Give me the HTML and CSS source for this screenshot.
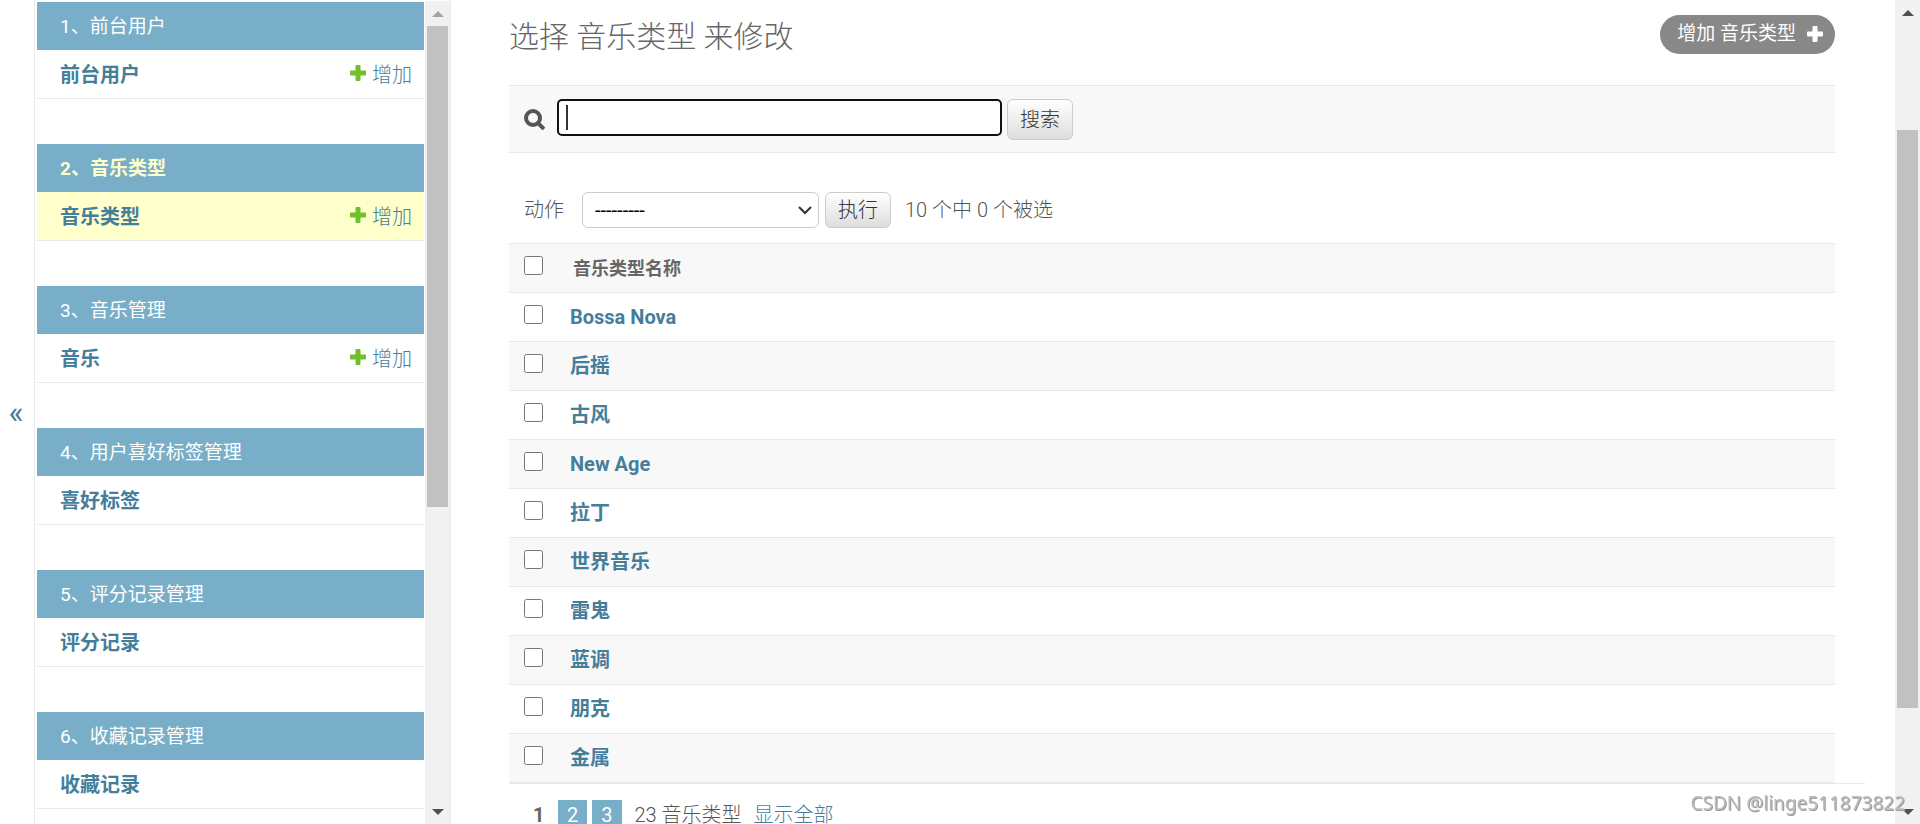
FILE: index.html
```html
<!DOCTYPE html>
<html lang="zh-hans">
<head>
  <meta charset="UTF-8" />
  <meta name="viewport" content="width=device-width, initial-scale=1.0" />
  <title>选择 音乐类型 来修改</title>
  <link rel="stylesheet" href="styles.css">
</head>
<body>
  <button class="toggle-nav" aria-label="切换导航">«</button>

  <nav class="sidebar">
    <div class="app-list">
      <section class="module">
        <h2><a href="#">1、前台用户</a></h2>
        <div class="model"><a href="#">前台用户</a><a href="#" class="addlink"><svg viewBox="0 0 16 16"><path d="M6.5 0h3q1 0 1 1v4.500h4.500q1 0 1 1v3q0 1-1 1h-4.500v4.500q0 1-1 1h-3q-1 0-1-1v-4.500H1q-1 0-1-1v-3q0-1 1-1h4.500V1q0-1 1-1z"/></svg>增加</a></div>
      </section>
      <section class="module current">
        <h2><a href="#">2、音乐类型</a></h2>
        <div class="model"><a href="#">音乐类型</a><a href="#" class="addlink"><svg viewBox="0 0 16 16"><path d="M6.5 0h3q1 0 1 1v4.500h4.500q1 0 1 1v3q0 1-1 1h-4.500v4.500q0 1-1 1h-3q-1 0-1-1v-4.500H1q-1 0-1-1v-3q0-1 1-1h4.500V1q0-1 1-1z"/></svg>增加</a></div>
      </section>
      <section class="module">
        <h2><a href="#">3、音乐管理</a></h2>
        <div class="model"><a href="#">音乐</a><a href="#" class="addlink"><svg viewBox="0 0 16 16"><path d="M6.5 0h3q1 0 1 1v4.500h4.500q1 0 1 1v3q0 1-1 1h-4.500v4.500q0 1-1 1h-3q-1 0-1-1v-4.500H1q-1 0-1-1v-3q0-1 1-1h4.500V1q0-1 1-1z"/></svg>增加</a></div>
      </section>
      <section class="module">
        <h2><a href="#">4、用户喜好标签管理</a></h2>
        <div class="model"><a href="#">喜好标签</a></div>
      </section>
      <section class="module">
        <h2><a href="#">5、评分记录管理</a></h2>
        <div class="model"><a href="#">评分记录</a></div>
      </section>
      <section class="module">
        <h2><a href="#">6、收藏记录管理</a></h2>
        <div class="model"><a href="#">收藏记录</a></div>
      </section>
    </div>
    <div class="scrollbar nav-scroll">
      <svg class="arrow off" viewBox="0 0 25 25"><path d="M7 16l6-6 6 6z"/></svg>
      <div class="thumb"></div>
      <div class="after"></div>
      <svg class="arrow" viewBox="0 0 25 25"><path d="M7 10l6 6 6-6z"/></svg>
    </div>
  </nav>

  <main class="content">
    <div class="title-row">
      <h1>选择 音乐类型 来修改</h1>
      <a href="#" class="add-button">增加 音乐类型<svg viewBox="0 0 16 16"><path d="M6.500 0h3q1 0 1 1v4.500h4.500q1 0 1 1v3q0 1-1 1h-4.500v4.500q0 1-1 1h-3q-1 0-1-1v-4.500H1q-1 0-1-1v-3q0-1 1-1h4.500V1q0-1 1-1z"/></svg></a>
    </div>

    <form class="toolbar">
      <label for="searchbar" aria-label="搜索"><svg viewBox="0 0 21 21"><circle cx="9" cy="9" r="7"/><path d="M14 14l6 6"/></svg></label>
      <input type="text" id="searchbar">
      <button type="button">搜索</button>
    </form>

    <div class="actions">
      <label for="action">动作</label>
      <span class="select-wrap">
        <select id="action">
          <option>---------</option>
          <option>删除所选的 音乐类型</option>
        </select>
        <svg viewBox="0 0 14 9"><path d="M1 1l6 6 6-6"/></svg>
      </span>
      <button type="button">执行</button>
      <span class="counter">10 个中 0 个被选</span>
    </div>

    <table class="results">
      <thead>
        <tr><th><input type="checkbox" aria-label="全选"></th><th class="name">音乐类型名称</th></tr>
      </thead>
      <tbody>
        <tr><td><input type="checkbox" id="r1" aria-label="Bossa Nova"></td><th><a href="#">Bossa Nova</a></th></tr>
        <tr><td><input type="checkbox" id="r2" aria-label="后摇"></td><th><a href="#">后摇</a></th></tr>
        <tr><td><input type="checkbox" id="r3" aria-label="古风"></td><th><a href="#">古风</a></th></tr>
        <tr><td><input type="checkbox" id="r4" aria-label="New Age"></td><th><a href="#">New Age</a></th></tr>
        <tr><td><input type="checkbox" id="r5" aria-label="拉丁"></td><th><a href="#">拉丁</a></th></tr>
        <tr><td><input type="checkbox" id="r6" aria-label="世界音乐"></td><th><a href="#">世界音乐</a></th></tr>
        <tr><td><input type="checkbox" id="r7" aria-label="雷鬼"></td><th><a href="#">雷鬼</a></th></tr>
        <tr><td><input type="checkbox" id="r8" aria-label="蓝调"></td><th><a href="#">蓝调</a></th></tr>
        <tr><td><input type="checkbox" id="r9" aria-label="朋克"></td><th><a href="#">朋克</a></th></tr>
        <tr><td><input type="checkbox" id="r10" aria-label="金属"></td><th><a href="#">金属</a></th></tr>
      </tbody>
    </table>

    <div class="paginator">
      <span class="this-page">1</span>
      <a href="#" class="page">2</a>
      <a href="#" class="page">3</a>
      <span class="total">23 音乐类型</span>
      <a href="#" class="showall">显示全部</a>
    </div>
  </main>

  <div class="scrollbar page-scroll">
    <svg class="arrow" viewBox="0 0 25 25"><path d="M7 16l6-6 6 6z"/></svg>
    <div class="before"></div>
    <div class="thumb"></div>
    <div class="after"></div>
    <svg class="arrow" viewBox="0 0 25 25"><path d="M7 10l6 6 6-6z"/></svg>
  </div>

  <div class="watermark">CSDN @linge511873822</div>
</body>
</html>
```
FILE: styles.css
```css
:root {
  --link: #447e9b;
  --primary: #79aec8;
  --border: #e8e8e8;
  --body-fg: #666;
  --shade: #f8f8f8;
}

* {
  box-sizing: border-box;
}
body {
  margin: 0;
  display: flex;
  height: 100vh;
  overflow: hidden;
  background: #fff;
  color: var(--body-fg);
  font-family: Roboto, "Noto Sans CJK SC", sans-serif;
  font-size: 20px;
  font-weight: 400;
  line-height: 28px;
}
a {
  color: var(--link);
  text-decoration: none;
}
button, input, select {
  font: inherit;
}

/* sidebar */
.toggle-nav {
  flex: none;
  width: 35px;
  padding: 0 2px 0 0;
  border: none;
  border-right: 1px solid #eaeaea;
  background: #fff;
  color: var(--link);
  font-size: 32px;
}
.sidebar {
  flex: none;
  display: flex;
  width: 416px;
  padding-left: 2px;
  border-right: 1px solid #eaeaea;
}
.app-list {
  flex: 1;
  padding: 2px 1px 0 0;
}
.module {
  margin-bottom: 45px;
}
.module h2 {
  margin: 0;
  padding: 11px 23px 9px;
  background: var(--primary);
  font-size: 19px;
  font-weight: 400;
}
.module h2 a {
  color: #fff;
}
.model {
  display: flex;
  justify-content: space-between;
  padding: 11px 12px 9px 23px;
  border-bottom: 1px solid var(--border);
  font-weight: 700;
}
.addlink {
  display: flex;
  align-items: center;
  font-weight: 300;
}
.addlink svg {
  width: 16px;
  height: 16px;
  margin: 0 6px 4px 0;
  fill: #70bf2b;
}
.current h2 a {
  color: #ffc;
  font-weight: 700;
}
.current .model {
  background: #ffc;
}

/* scrollbars */
.scrollbar {
  flex: none;
  display: flex;
  flex-direction: column;
  width: 25px;
  background: #f1f1f1;
}
.arrow {
  flex: none;
  width: 25px;
  height: 25px;
  fill: #505050;
}
.arrow.off {
  fill: #a3a3a3;
}
.thumb {
  margin: 0 2px;
  background: #c1c1c1;
}
.nav-scroll {
  margin-top: 1px;
}
.nav-scroll .thumb {
  flex: 481;
}
.nav-scroll .after {
  flex: 292;
}
.page-scroll .before {
  flex: 105;
}
.page-scroll .thumb {
  flex: 578;
}
.page-scroll .after {
  flex: 91;
}

/* content */
.content {
  flex: 1;
  padding: 15px 60px 0 58px;
}
.title-row {
  display: flex;
  justify-content: space-between;
  align-items: flex-start;
  height: 70px;
}
h1 {
  margin: 0;
  font-size: 30px;
  font-weight: 300;
  line-height: 43px;
}
.add-button {
  display: flex;
  align-items: center;
  gap: 11px;
  height: 39px;
  padding: 0 12px 2px 17px;
  border-radius: 20px;
  background: #888;
  color: #fff;
  font-size: 19px;
}
.add-button svg {
  width: 16px;
  height: 16px;
  fill: #fff;
}
.toolbar {
  display: flex;
  align-items: flex-start;
  height: 68px;
  padding: 13px 15px;
  border-top: 1px solid var(--border);
  border-bottom: 1px solid var(--border);
  background: var(--shade);
}
.toolbar label {
  width: 33px;
  padding-top: 10px;
  line-height: 0;
}
.toolbar svg {
  width: 21px;
  height: 21px;
  fill: none;
  stroke: #555;
  stroke-width: 4;
}
.toolbar input {
  width: 445px;
  height: 37px;
  margin-right: 5px;
  border: 2px solid #101010;
  border-radius: 5px;
  background: #fff linear-gradient(#333, #333) no-repeat 7px 4px / 2px 25px;
}
button {
  cursor: pointer;
}
.toolbar button, .actions button {
  width: 66px;
  height: 41px;
  padding: 0;
  border: 1px solid #ccc;
  border-radius: 6px;
  background: linear-gradient(#fff, #ddd);
  color: #333;
  font-weight: 300;
}
.actions {
  display: flex;
  align-items: center;
  padding: 39px 15px 15px;
}
.actions label {
  width: 58px;
}
.select-wrap {
  position: relative;
  width: 237px;
  margin-right: 6px;
}
.select-wrap select {
  display: block;
  appearance: none;
  width: 100%;
  height: 36px;
  padding: 0 12px;
  border: 1px solid #ccc;
  border-radius: 6px;
  background: #fff;
  color: #000;
}
.select-wrap svg {
  position: absolute;
  right: 7px;
  top: 14px;
  width: 14px;
  height: 9px;
  fill: none;
  stroke: #333;
  stroke-width: 2;
}
.actions button {
  height: 36px;
}
.counter {
  margin-left: 14px;
}
.actions label, .counter, .total, .showall {
  font-weight: 300;
  color: #555;
}

.results {
  width: 100%;
  border-collapse: separate;
  border-spacing: 0;
}
.results th, .results td {
  height: 49px;
  padding: 10px 0;
  border-bottom: 1px solid var(--border);
  text-align: left;
  vertical-align: top;
}
.results td, .results thead th:first-child {
  width: 61px;
  padding: 12px 15px;
  line-height: 0;
}
.results thead th {
  height: 50px;
  border-top: 1px solid var(--border);
  background: var(--shade);
}
.results thead .name {
  padding: 11px 3px 9px;
  font-size: 18px;
}
.results tbody tr:nth-child(even) {
  background: var(--shade);
}
input[type="checkbox"] {
  width: 19px;
  height: 19px;
  margin: 0;
}
.paginator {
  display: flex;
  margin-right: -30px;
  padding: 16px 0 15px 24px;
  border-top: 1px solid var(--border);
  line-height: 30px;
}
.this-page {
  width: 25px;
  font-weight: 700;
}
.page {
  margin-right: 5px;
  padding: 0 9px;
  background: var(--primary);
  color: #fff;
}
.total {
  margin: 0 12px 0 8px;
}
.paginator .showall {
  color: var(--link);
}

.watermark {
  position: fixed;
  right: 15px;
  bottom: 7px;
  color: #bbb;
  font-family: "Noto Sans", sans-serif;
  font-size: 19px;
  text-shadow: 1px 1px 0 #999;
}
```
